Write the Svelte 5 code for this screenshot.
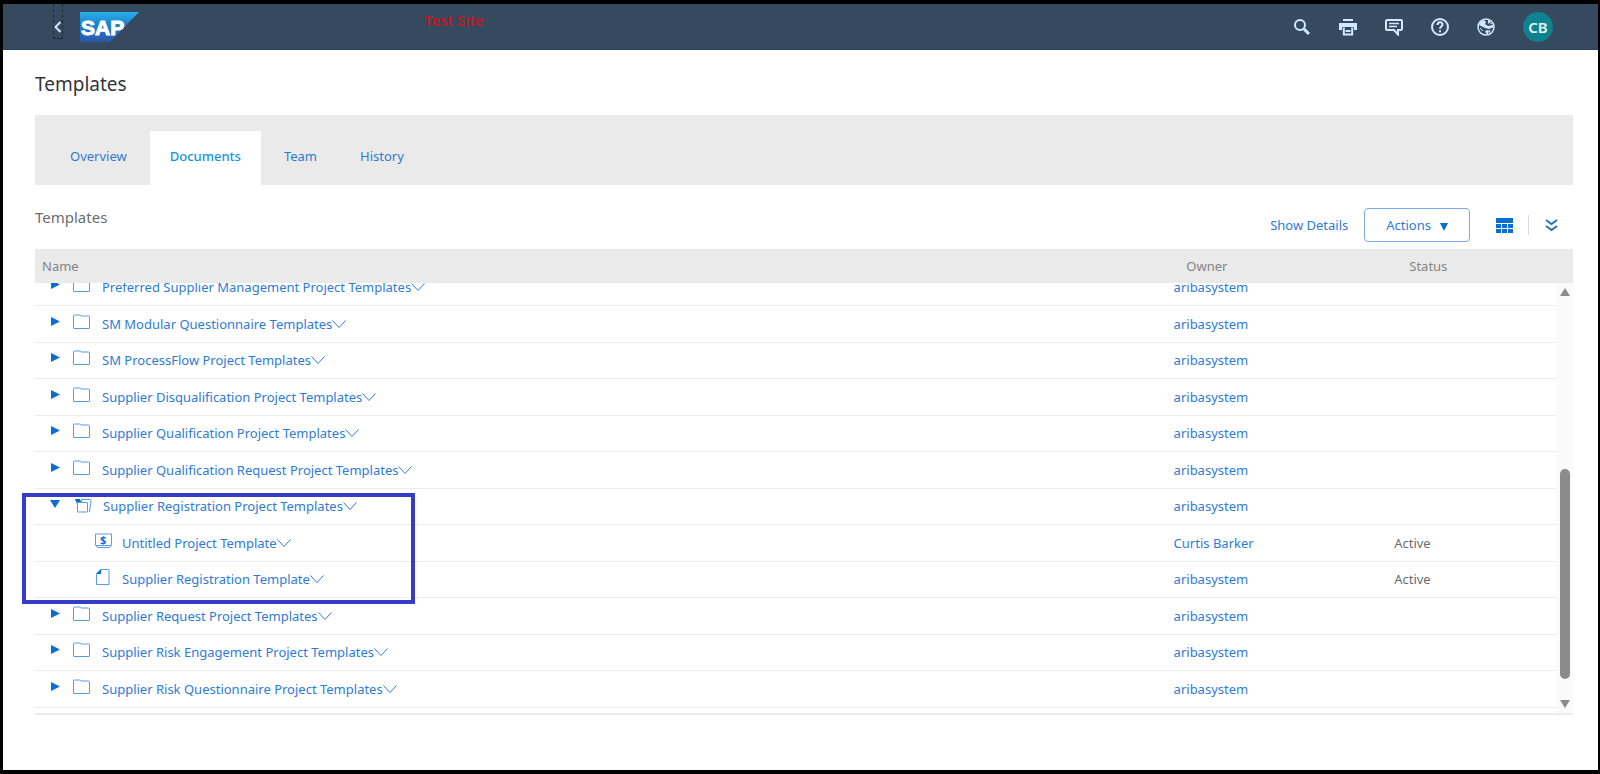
<script lang="ts">
	type Row = {
		name: string;
		kind: 'folder' | 'open' | 'project' | 'doc';
		owner: string;
		status?: string;
	};

	const tabs = ['Overview', 'Documents', 'Team', 'History'];
	let activeTab = 'Documents';

	const rows: Row[] = [
		{ name: 'Preferred Supplier Management Project Templates', kind: 'folder', owner: 'aribasystem' },
		{ name: 'SM Modular Questionnaire Templates', kind: 'folder', owner: 'aribasystem' },
		{ name: 'SM ProcessFlow Project Templates', kind: 'folder', owner: 'aribasystem' },
		{ name: 'Supplier Disqualification Project Templates', kind: 'folder', owner: 'aribasystem' },
		{ name: 'Supplier Qualification Project Templates', kind: 'folder', owner: 'aribasystem' },
		{ name: 'Supplier Qualification Request Project Templates', kind: 'folder', owner: 'aribasystem' },
		{ name: 'Supplier Registration Project Templates', kind: 'open', owner: 'aribasystem' },
		{ name: 'Untitled Project Template', kind: 'project', owner: 'Curtis Barker', status: 'Active' },
		{ name: 'Supplier Registration Template', kind: 'doc', owner: 'aribasystem', status: 'Active' },
		{ name: 'Supplier Request Project Templates', kind: 'folder', owner: 'aribasystem' },
		{ name: 'Supplier Risk Engagement Project Templates', kind: 'folder', owner: 'aribasystem' },
		{ name: 'Supplier Risk Questionnaire Project Templates', kind: 'folder', owner: 'aribasystem' }
	];

	const isChild = (row: Row) => row.kind === 'project' || row.kind === 'doc';
</script>

<div class="window">
	<header class="shell">
		<button class="back" aria-label="Back">
			<svg width="8" height="12" viewBox="0 0 8 12"><path d="M6.5 1 1.5 6l5 5" /></svg>
		</button>
		<a class="logo" href="#home" aria-label="SAP">
			<svg width="59" height="30" viewBox="0 0 59 30">
				<defs>
					<linearGradient id="sap" x1="0" y1="0" x2="0" y2="1">
						<stop offset="0" stop-color="#27b1e9" />
						<stop offset="0.4" stop-color="#1b86d0" />
						<stop offset="1" stop-color="#2c56a8" />
					</linearGradient>
				</defs>
				<path d="M0 0h59L30 30H0z" fill="url(#sap)" stroke="none" />
				<text x="1" y="23">SAP</text>
			</svg>
		</a>
		<span class="site">Test Site</span>
		<nav class="tools">
			<button aria-label="Search">
				<svg width="18" height="18" viewBox="0 0 18 18">
					<circle cx="7" cy="7" r="5" />
					<path d="m11 11 5 5" stroke-width="3" />
				</svg>
			</button>
			<button aria-label="Print">
				<svg width="18" height="18" viewBox="0 0 18 18">
					<path d="M4 1h10v2H4zM0 5h18v7h-3V9H3v3H0z" fill="#d1e8ff" stroke="none" />
					<path d="M4.800 9.500v7h8.400v-7M6.500 13h5" />
				</svg>
			</button>
			<button aria-label="Messages">
				<svg width="18" height="18" viewBox="0 0 18 18">
					<path d="M2 2h14q1 0 1 1v8q0 1-1 1h-3v4.500L9 12H2q-1 0-1-1V3q0-1 1-1z" />
					<path d="M4 5.500h10M4 8.500h8" stroke-width="1.500" />
				</svg>
			</button>
			<button aria-label="Help">
				<svg width="18" height="18" viewBox="0 0 18 18">
					<circle cx="9" cy="9" r="8" />
					<path d="M6.500 7c0-3.500 5-3.500 5-.5 0 2-2.500 2-2.500 4.200M9 12.200v2" />
				</svg>
			</button>
			<button aria-label="Language">
				<svg width="18" height="18" viewBox="0 0 18 18">
					<circle cx="9" cy="9" r="8" stroke-width="1.500" />
					<path
						d="M3 4l4-2 2 2-1 2 3 2 5-1 1 2-5 2-4-1-4-2-2-1zM11 2l3 1-3 3zM8 13l3-1 1 1-2 4z"
						fill="#d1e8ff"
						stroke-width="0"
					/>
					<path d="M12 4l3 2M3 10l3 3M13 12l-1 3" stroke-width="1" />
				</svg>
			</button>
			<button class="avatar">CB</button>
		</nav>
	</header>

	<main>
		<h1>Templates</h1>

		<nav class="tabs">
			{#each tabs as tab}
				<button class:active={tab === activeTab} on:click={() => (activeTab = tab)}>{tab}</button>
			{/each}
		</nav>

		<div class="toolbar">
			<h2>Templates</h2>
			<a class="details" href="#details">Show Details</a>
			<button class="actions">
				Actions
				<svg width="8" height="8" viewBox="0 0 8 8"><path d="M0 0h8L4 8z" /></svg>
			</button>
			<button class="icon" aria-label="Table options">
				<svg width="17" height="15" viewBox="0 0 17 15">
					<path d="M0 0h17v5H0zM0 6h5v4H0zM6 6h5v4H6zM12 6h5v4h-5zM0 11h5v4H0zM6 11h5v4H6zM12 11h5v4h-5z" />
				</svg>
			</button>
			<span class="rule"></span>
			<button class="icon expand" aria-label="Expand all">
				<svg width="13" height="13" viewBox="0 0 13 13"><path d="m1 1 5.500 4L12 1M1 7l5.500 4L12 7" /></svg>
			</button>
		</div>

		<table class="head">
			<thead>
				<tr>
					<th class="name">Name</th>
					<th class="owner">Owner</th>
					<th>Status</th>
				</tr>
			</thead>
		</table>

		<div class="scroller">
			<div class="viewport">
				<table class="list">
					<tbody>
						{#each rows as row}
							<tr>
								<td class="name">
									<div class="entry" class:child={isChild(row)} class:open={row.kind === 'open'}>
										{#if !isChild(row)}
											<button class="toggle" aria-label="Toggle {row.name}">
												<svg width="10" height="10" viewBox="0 0 10 10">
													<path d={row.kind === 'open' ? 'M0 1h10L5 9z' : 'M1 0v9l9-4.500z'} />
												</svg>
											</button>
										{/if}
										<svg class="kind" width="17" height="16" viewBox="0 0 17 16">
											{#if row.kind === 'folder'}
												<path d="M.5 14V2q0-1 1-1H7l1.500 1h7q1 0 1 1v11q0 .5-.5.5H1q-.5 0-.5-.5z" />
											{:else if row.kind === 'open'}
												<path d="M6.500 4V1.500H15q1 0 1 1L14.500 14" />
												<path d="M2.500 13.500V4.500H12q.5 0 .5.500v8.500q0 .5-.5.5H3q-.5 0-.5-.5z" />
												<path class="solid" d="M0 1h5l1 3H2v2z" />
											{:else if row.kind === 'project'}
												<path d="M.5 1h16v11l-2 2.500h-12L.5 12zM1 12.500h15" />
												<text x="5" y="11">$</text>
											{:else}
												<path d="M6 .5h7.500q.5 0 .5.500v14.500H1.500V5z" />
												<path class="solid" d="M6 0v5H1z" />
											{/if}
										</svg>
										<a href="#item">{row.name}</a>
										<svg class="menu" width="14" height="8" viewBox="0 0 14 8"><path d="m.5.5 6.500 7 6.500-7" /></svg>
									</div>
								</td>
								<td class="owner"><a href="#owner">{row.owner}</a></td>
								<td>{row.status ?? ''}</td>
							</tr>
						{/each}
					</tbody>
				</table>
			</div>
			<div class="scrollbar">
				<svg width="10" height="8" viewBox="0 0 10 8"><path d="M5 0l5 8H0z" /></svg>
				<div class="track"><div class="thumb"></div></div>
				<svg width="10" height="8" viewBox="0 0 10 8"><path d="M0 0h10L5 8z" /></svg>
			</div>
			<div class="highlight"></div>
		</div>
	</main>
</div>

<style>
	:global(body) {
		background: #fff;
	}

	.window {
		box-sizing: border-box;
		min-height: 100vh;
		border: solid #000;
		border-width: 4px 2px 4px 3px;
		font-family: 'Noto Sans', 'Open Sans', sans-serif;
		font-size: 13px;
		line-height: 20px;
		color: #6a6d70;
	}

	button {
		padding: 0;
		border: 0;
		background: none;
		font: inherit;
		color: inherit;
		cursor: pointer;
	}

	svg {
		display: block;
		flex: none;
	}

	a {
		color: #2f7bd6;
		text-decoration: none;
	}

	.shell {
		display: flex;
		box-sizing: border-box;
		height: 46px;
		padding: 0 45px 0 50px;
		border-bottom: 1px solid #27425f;
		background: #354a5f;
	}

	.shell svg {
		fill: none;
		stroke: #d1e8ff;
		stroke-width: 2;
	}

	.back {
		display: flex;
		align-items: flex-end;
		height: 35px;
		padding-bottom: 5px;
		border: 1px dashed #1d2a36;
		border-top: 0;
	}

	.logo {
		padding: 8px 0 0 17px;
	}

	.logo text {
		font-family: 'Liberation Sans', sans-serif;
		font-size: 21px;
		font-weight: 700;
		fill: #fff;
		stroke: #fff;
		stroke-width: 1;
	}

	.site {
		padding: 6px 0 0 285px;
		font-size: 15px;
		font-weight: 500;
		color: #d0121b;
	}

	.tools {
		display: flex;
		align-items: center;
		gap: 28px;
		margin-left: auto;
	}

	.avatar {
		width: 30px;
		height: 30px;
		border-radius: 50%;
		background: #0f828f;
		color: #e4f6f8;
		font-weight: 600;
		font-size: 15px;
	}

	main {
		padding: 20px 25px 0 32px;
	}

	h1 {
		margin: 0;
		font-size: 19px;
		font-weight: 400;
		line-height: 28px;
		color: #32363a;
	}

	.tabs {
		display: flex;
		gap: 3px;
		margin-top: 17px;
		padding: 16px 15px 0;
		background: #eaeaea;
	}

	.tabs button {
		height: 54px;
		padding: 0 20px 4px;
		color: #2f7bd6;
	}

	.tabs .active {
		background: #fff;
		color: #1496dd;
		font-weight: 500;
	}

	.toolbar {
		display: flex;
		align-items: center;
		height: 64px;
		padding-right: 15px;
	}

	h2 {
		margin: 0 auto 0 0;
		font-size: 15px;
		font-weight: 400;
	}

	.actions {
		display: flex;
		align-items: center;
		gap: 9px;
		height: 34px;
		margin: 16px 26px 0 16px;
		padding: 0 21px;
		border: 1px solid #7ba9e8;
		border-radius: 4px;
		color: #2f7bd6;
	}

	.actions svg,
	.icon svg {
		fill: #0a6ed1;
	}

	.actions svg {
		margin-top: 3px;
	}

	.details,
	.icon,
	.rule {
		margin-top: 16px;
	}

	.rule {
		width: 1px;
		height: 20px;
		margin-right: 16px;
		margin-left: 15px;
		background: #d9d9d9;
	}

	.expand svg {
		fill: none;
		stroke: #2a6fb5;
		stroke-width: 2;
	}

	table {
		width: 100%;
		border-collapse: collapse;
		table-layout: fixed;
	}

	th,
	td {
		box-sizing: border-box;
		padding: 0 7px;
		text-align: left;
		font-weight: 400;
	}

	.name {
		width: 74.4%;
	}

	.owner {
		width: 14.5%;
	}

	.head th {
		height: 34px;
		background: #eaeaea;
		color: #858585;
	}

	.scroller {
		position: relative;
		display: flex;
		border-bottom: 2px solid #ececec;
	}

	.viewport {
		flex: 1;
		overflow: hidden;
		padding-bottom: 5px;
	}

	/* list is scrolled part-way past its first row */
	.list {
		margin-top: -14px;
	}

	.list td {
		height: 36px;
		border-bottom: 1px solid #ececec;
	}

	.list tr:nth-child(even) td {
		height: 37px;
	}

	.entry {
		display: flex;
		align-items: center;
		padding-left: 8px;
	}

	.toggle {
		margin: 0 13px 4px 0;
		fill: #0a6ed1;
	}

	.kind {
		margin: 0 12px 4px 0;
		fill: none;
		stroke: #5b9be3;
	}

	.open .kind {
		margin: 0 11px 0 2px;
	}

	.child {
		padding-left: 53px;
	}

	.child .kind {
		margin-right: 10px;
	}

	.kind .solid,
	.kind text {
		fill: #0a6ed1;
		stroke: none;
		font-size: 11px;
		font-weight: 700;
	}

	.menu {
		fill: none;
		stroke: #2f7bd6;
		stroke-width: 1;
	}

	.highlight {
		position: absolute;
		left: -13px;
		top: 210px;
		width: 393px;
		height: 111px;
		box-sizing: border-box;
		border: 4px solid #343cc8;
		pointer-events: none;
	}

	.scrollbar {
		display: flex;
		flex-direction: column;
		align-items: center;
		gap: 6px;
		width: 17px;
		padding: 5px 0;
		box-sizing: border-box;
		background: #fafafa;
		fill: #8b8b8b;
	}

	.track {
		display: flex;
		flex: 1;
		flex-direction: column;
		justify-content: flex-end;
		padding-bottom: 15px;
	}

	.thumb {
		width: 10px;
		height: 210px;
		border-radius: 5px;
		background: #8b8b8b;
	}
</style>
